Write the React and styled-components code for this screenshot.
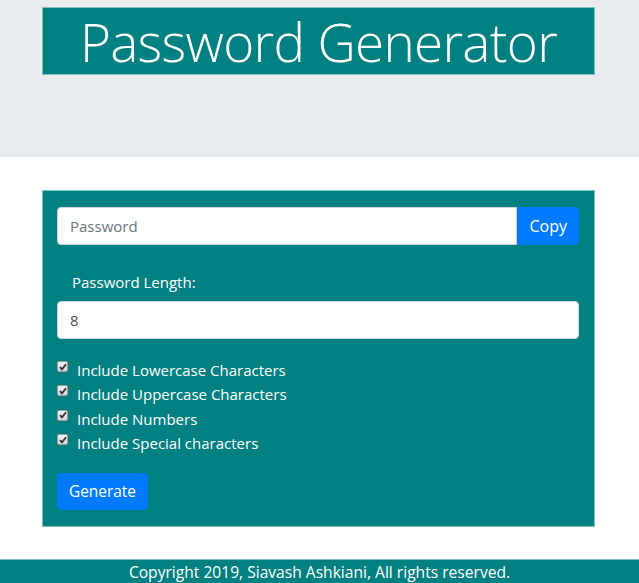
import React from 'react'
import styled, { createGlobalStyle } from 'styled-components'

const GlobalStyle = createGlobalStyle`
  body {
    margin: 0;
    font-family: "Open Sans", "Noto Sans", sans-serif;
    font-size: 16px;
    line-height: 1.5;
    color: #212529;
    background: #fff;
  }
  * { box-sizing: border-box; }
`;

const Page = styled.div`
  display: flex;
  flex-direction: column;
`;

const Jumbotron = styled.header`
  background: #e9ecef;
  height: 157px;
  padding-top: 7px;
`;

const Container = styled.div`
  width: 553px;
  margin: 0 0 0 42px;
`;

const TitleBox = styled.div`
  background: #008080;
  border: 1px solid #7fbfbf;
  height: 68px;
  display: flex;
  align-items: center;
  justify-content: center;
`;

const Title = styled.h1`
  margin: 0;
  color: #fff;
  font-size: 53px;
  font-weight: 300;
  line-height: 1;
  letter-spacing: -0.7px;
`;

const Main = styled.main`
  padding: 33px 0 32px;
`;

const Card = styled.div`
  background: #008080;
  border: 1px solid #7fbfbf;
  padding: 16px 15px 16px 14px;
  color: #fff;
  font-size: 15px;
`;

const InputGroup = styled.div`
  display: flex;
  height: 38px;
`;

const Field = styled.input`
  flex: 1;
  height: 38px;
  padding: 6px 12px;
  font-family: inherit;
  font-size: 15px;
  color: #495057;
  background: #fff;
  border: 1px solid #ced4da;
  border-radius: ${({ $joined }) => ($joined ? '4px 0 0 4px' : '4px')};
  outline: none;
  &::placeholder { color: #6c757d; }
`;

const Button = styled.button`
  background: #007bff;
  color: #fff;
  border: 1px solid #007bff;
  font-family: inherit;
  font-size: ${({ $joined }) => ($joined ? '16px' : '15.4px')};
  padding: 0 11px;
  height: ${({ $joined }) => ($joined ? '38px' : '37px')};
  border-radius: ${({ $joined }) => ($joined ? '0 4px 4px 0' : '4px')};
  cursor: pointer;
`;

const Label = styled.label`
  display: block;
  padding: 26px 0 8px 15px;
  line-height: 22px;
`;

const Options = styled.div`
  margin-top: 19px;
  display: flex;
  flex-direction: column;
`;

const Option = styled.label`
  display: flex;
  align-items: flex-start;
  height: 24.4px;
  line-height: 24px;
`;

const Check = styled.span`
  width: 11px;
  height: 11px;
  margin: 3px 9px 0 0;
  border: 1px solid #a0a0a0;
  border-radius: 2px;
  background: linear-gradient(#f0f0f0, #d8d8d8);
  display: flex;
  align-items: center;
  justify-content: center;
`;

const Actions = styled.div`
  margin-top: 17px;
`;

const Footer = styled.footer`
  background: #008080;
  border-top: 1px solid #7fbfbf;
  color: #fff;
  text-align: center;
  font-size: 15.6px;
  line-height: 24px;
`;

const options = [
  'Include Lowercase Characters',
  'Include Uppercase Characters',
  'Include Numbers',
  'Include Special characters',
];

const App = () => {
  return (
    <Page>
      <GlobalStyle />
      <Jumbotron>
        <Container>
          <TitleBox>
            <Title>Password Generator</Title>
          </TitleBox>
        </Container>
      </Jumbotron>
      <Main>
        <Container>
          <Card>
            <InputGroup>
              <Field $joined placeholder="Password" readOnly />
              <Button $joined>Copy</Button>
            </InputGroup>
            <Label>Password Length:</Label>
            <InputGroup>
              <Field defaultValue="8" />
            </InputGroup>
            <Options>
              {options.map((o) => (
                <Option key={o}>
                  <Check>
                    <svg width="8" height="8" viewBox="0 0 8 8">
                      <path d="M1 4.2 L3 6.3 L7 1.2" fill="none" stroke="#333" strokeWidth="1.8" />
                    </svg>
                  </Check>
                  {o}
                </Option>
              ))}
            </Options>
            <Actions>
              <Button>Generate</Button>
            </Actions>
          </Card>
        </Container>
      </Main>
      <Footer>Copyright 2019, Siavash Ashkiani, All rights reserved.</Footer>
    </Page>
  )
}

export default App;
